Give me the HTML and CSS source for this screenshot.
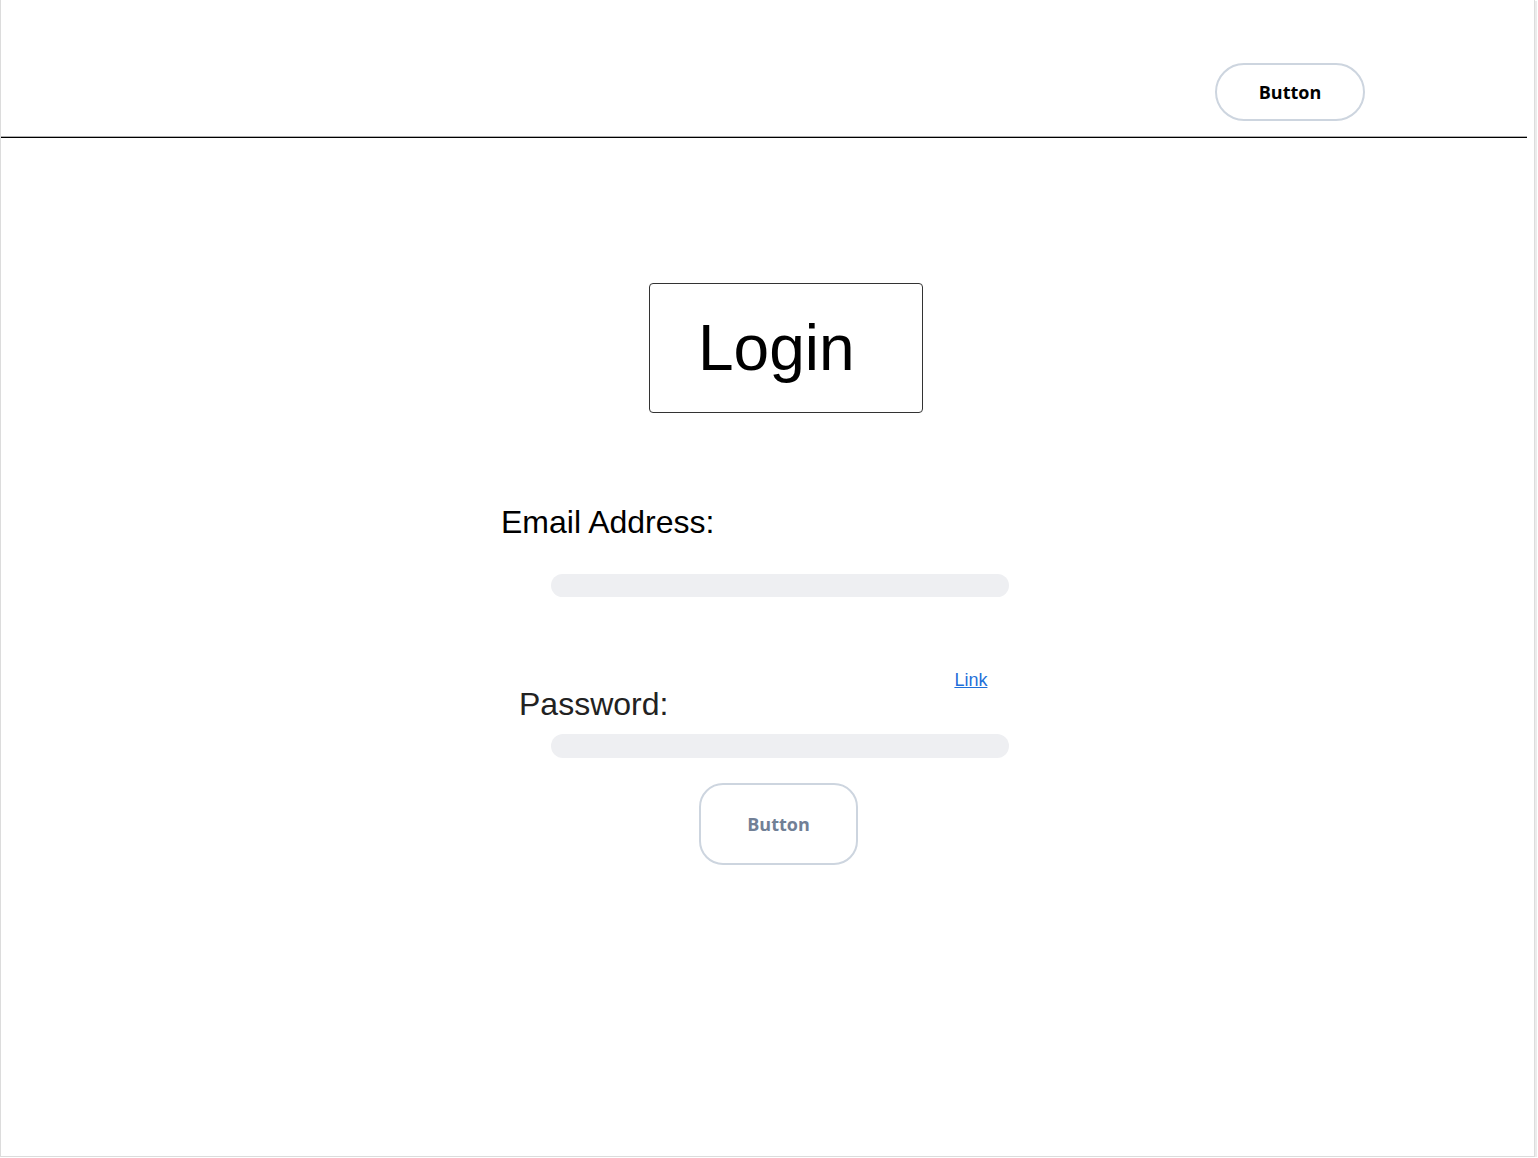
FILE: index.html
```html
<!DOCTYPE html>
<html lang="en">
  <head>
    <meta charset="UTF-8" />
    <meta name="viewport" content="width=device-width, initial-scale=1.0" />
    <title>Login</title>
    <link rel="stylesheet" href="styles.css">
  </head>
  <body>
    <div class="frame">
      <header class="top-bar">
        <button type="button" class="pill-btn">Button</button>
      </header>
      <main class="login-page">
        <div class="login-title">Login</div>
        <form id="login-form" class="login-form">
          <label for="email" class="field-label email-label">Email Address:</label>
          <input type="email" id="email" class="field-input email-input" />
          <div class="password-row">
            <label for="password" class="field-label password-label">Password:</label>
            <a href="#" class="forgot-link">Link</a>
          </div>
          <input type="password" id="password" class="field-input password-input" />
          <button type="button" class="submit-btn">Button</button>
        </form>
      </main>
    </div>
  </body>
</html>
```

FILE: styles.css
```css
body {
  margin: 0;
  background-color: #fff;
  font-family: "Liberation Sans", Arial, sans-serif;
}
.frame {
  box-sizing: border-box;
  width: 1535px;
  height: 1157px;
  border: 1px solid #dcdcdc;
  border-top: none;
  box-shadow: 2px 1px 0 #ececec;
}
.top-bar {
  box-sizing: border-box;
  width: 1526px;
  height: 138px;
  padding: 63px 162px 0 0;
  border-bottom: 1px solid #000;
  box-shadow: inset 0 -1px 0 #b0b0b0;
  display: flex;
  justify-content: flex-end;
  align-items: flex-start;
}
.pill-btn {
  box-sizing: border-box;
  width: 150px;
  height: 58px;
  border: 2px solid #cdd5df;
  border-radius: 29px;
  background-color: #fff;
  font-family: "Open Sans", sans-serif;
  font-weight: 700;
  font-size: 18px;
  color: #000;
  cursor: pointer;
}
.login-page {
  padding: 145px 0 0 500px;
  display: flex;
  flex-direction: column;
  align-items: flex-start;
}
.login-title {
  box-sizing: border-box;
  width: 274px;
  height: 130px;
  margin-left: 148px;
  padding: 26px 0 0 48px;
  border: 1px solid #333;
  border-radius: 4px;
  font-size: 64px;
  line-height: 76px;
  color: #000;
}
.login-form {
  display: flex;
  flex-direction: column;
  align-items: flex-start;
}
.field-label {
  font-size: 32px;
  line-height: 37px;
}
.email-label {
  margin-top: 91px;
  color: #000;
}
.field-input {
  box-sizing: border-box;
  width: 458px;
  height: 24px;
  margin-left: 50px;
  border: none;
  border-radius: 12px;
  background-color: #eeeff2;
}
.email-input {
  margin-top: 33px;
  height: 23px;
}
.password-row {
  display: flex;
  align-items: flex-start;
  margin-top: 73px;
}
.password-label {
  margin: 16px 0 0 18px;
  color: #222;
}
.forgot-link {
  margin-left: 286px;
  font-size: 18px;
  line-height: 21px;
  color: #1f6fd9;
}
.password-input {
  margin-top: 11px;
}
.submit-btn {
  box-sizing: border-box;
  width: 159px;
  height: 82px;
  margin: 25px 0 0 198px;
  border: 2px solid #cdd5df;
  border-radius: 24px;
  background-color: #fff;
  font-family: "Open Sans", sans-serif;
  font-weight: 700;
  font-size: 18px;
  color: #718096;
  cursor: pointer;
}
```
